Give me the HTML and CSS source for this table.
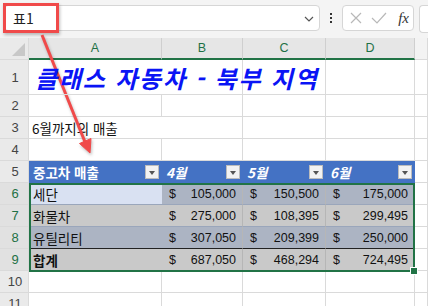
FILE: index.html
```html
<!DOCTYPE html>
<html lang="ko">
<head>
    <meta charset="UTF-8">
    <title>표1 - 북부 지역</title>
    <link rel="stylesheet" href="styles.css">
</head>
<body>
    <div class="topbar">
        <div class="name-box">
            <span>표1</span>
            <svg class="chev" width="10" height="6" viewBox="0 0 10 6"><path d="M1 1 L5 5 L9 1" fill="none" stroke="#555" stroke-width="1.2"/></svg>
        </div>
        <div class="dots"><i></i><i></i><i></i></div>
        <div class="fx-box">
            <svg width="14" height="14" viewBox="0 0 14 14"><path d="M2 2 L12 12 M12 2 L2 12" stroke="#b8b8b8" stroke-width="1.2"/></svg>
            <svg width="16" height="14" viewBox="0 0 16 14"><path d="M1 7 L6 12 L15 2" fill="none" stroke="#b8b8b8" stroke-width="1.2"/></svg>
            <span class="fx">fx</span>
        </div>
        <div class="formula-box"></div>
    </div>

    <div class="sheet">
        <!-- column headers -->
        <div class="corner"><span class="tri"></span></div>
        <div class="colhead sel">A</div>
        <div class="colhead sel">B</div>
        <div class="colhead sel">C</div>
        <div class="colhead sel">D</div>
        <div class="colhead"></div>

        <!-- row 1 -->
        <div class="rowhead tall">1</div>
        <div class="cell title">클래스 자동차 - 북부 지역</div>
        <div class="cell tall-cell"></div>
        <div class="cell tall-cell"></div>
        <div class="cell tall-cell"></div>
        <div class="cell tall-cell"></div>

        <!-- row 2 -->
        <div class="rowhead">2</div>
        <div class="cell"></div><div class="cell"></div><div class="cell"></div><div class="cell"></div><div class="cell"></div>

        <!-- row 3 -->
        <div class="rowhead">3</div>
        <div class="cell sub">6월까지의 매출</div>
        <div class="cell"></div><div class="cell"></div><div class="cell"></div><div class="cell"></div>

        <!-- row 4 -->
        <div class="rowhead">4</div>
        <div class="cell"></div><div class="cell"></div><div class="cell"></div><div class="cell"></div><div class="cell"></div>

        <!-- row 5: table header -->
        <div class="rowhead">5</div>
        <div class="cell th">중고차 매출<span class="filter"></span></div>
        <div class="cell th month">4월<span class="filter"></span></div>
        <div class="cell th month">5월<span class="filter"></span></div>
        <div class="cell th month">6월<span class="filter"></span></div>
        <div class="cell"></div>

        <!-- row 6 -->
        <div class="rowhead sel">6</div>
        <div class="cell td first light">세단</div>
        <div class="cell td money blue"><span>$</span><span>105,000</span></div>
        <div class="cell td money blue"><span>$</span><span>150,500</span></div>
        <div class="cell td money blue"><span>$</span><span>175,000</span></div>
        <div class="cell"></div>

        <!-- row 7 -->
        <div class="rowhead sel">7</div>
        <div class="cell td first gray">화물차</div>
        <div class="cell td money gray"><span>$</span><span>275,000</span></div>
        <div class="cell td money gray"><span>$</span><span>108,395</span></div>
        <div class="cell td money gray"><span>$</span><span>299,495</span></div>
        <div class="cell"></div>

        <!-- row 8 -->
        <div class="rowhead sel">8</div>
        <div class="cell td first blue before-total">유틸리티</div>
        <div class="cell td money blue before-total"><span>$</span><span>307,050</span></div>
        <div class="cell td money blue before-total"><span>$</span><span>209,399</span></div>
        <div class="cell td money blue before-total"><span>$</span><span>250,000</span></div>
        <div class="cell"></div>

        <!-- row 9 -->
        <div class="rowhead sel">9</div>
        <div class="cell td first gray total">합계</div>
        <div class="cell td money gray"><span>$</span><span>687,050</span></div>
        <div class="cell td money gray"><span>$</span><span>468,294</span></div>
        <div class="cell td money gray"><span>$</span><span>724,495</span></div>
        <div class="cell"></div>

        <!-- row 10 -->
        <div class="rowhead">10</div>
        <div class="cell"></div><div class="cell"></div><div class="cell"></div><div class="cell"></div><div class="cell"></div>

        <!-- row 11 -->
        <div class="rowhead">11</div>
        <div class="cell"></div><div class="cell"></div><div class="cell"></div><div class="cell"></div><div class="cell"></div>

        <div class="selection"><span class="handle"></span></div>
    </div>

    <!-- annotation -->
    <div class="callout"></div>
    <svg class="arrow" width="428" height="306" viewBox="0 0 428 306">
        <g fill="#f04a4a" stroke="#f04a4a">
            <line x1="42" y1="35" x2="85" y2="142" stroke-width="3"/>
            <polygon points="90,153 91,138.5 79.5,143.5" stroke-width="1"/>
        </g>
    </svg>
</body>
</html>
```

FILE: styles.css
```css
body {
    margin: 0;
    width: 428px;
    height: 306px;
    overflow: hidden;
    background-color: #fff;
    font-family: "Noto Sans CJK KR", "Liberation Sans", sans-serif;
    position: relative;
}
.topbar {
    height: 38px;
    background-color: #f4f4f4;
    display: flex;
    align-items: flex-start;
    padding-top: 5px;
    box-sizing: border-box;
}
.name-box {
    margin-left: 4px;
    width: 316px;
    height: 26px;
    box-sizing: border-box;
    background-color: #fff;
    border: 1px solid #d6d6d6;
    border-radius: 4px;
    display: flex;
    align-items: center;
    justify-content: space-between;
    padding: 0 5px 0 8px;
    font-size: 14px;
    color: #222;
}
.chev {
    margin-top: 1px;
}
.dots {
    width: 22px;
    height: 26px;
    display: flex;
    flex-direction: column;
    align-items: center;
    justify-content: center;
    gap: 2px;
}
.dots i {
    width: 2px;
    height: 2px;
    background-color: #333;
}
.fx-box {
    width: 72px;
    height: 26px;
    box-sizing: border-box;
    background-color: #fff;
    border: 1px solid #d6d6d6;
    border-radius: 4px;
    display: flex;
    align-items: center;
    padding: 0 4px 0 6px;
    gap: 8px;
}
.fx {
    font-family: "Liberation Serif", serif;
    font-style: italic;
    font-size: 15px;
    color: #333;
    margin-left: auto;
}
.formula-box {
    margin-left: 5px;
    flex: 1;
    height: 26px;
    background-color: #fff;
    border: 1px solid #d6d6d6;
    border-right: none;
    border-radius: 4px 0 0 4px;
}

/* sheet grid */
.sheet {
    display: grid;
    grid-template-columns: 29px 133px 81px 83px 89px 13px;
    grid-template-rows: 22px 35px repeat(10, 22px);
    position: relative;
}
.sheet > div {
    box-sizing: border-box;
    border-right: 1px solid #dadada;
    border-bottom: 1px solid #dadada;
}
.corner {
    background-color: #eaeaea;
    position: relative;
}
.tri {
    position: absolute;
    right: 3px;
    bottom: 3px;
    width: 0;
    height: 0;
    border-left: 13px solid transparent;
    border-bottom: 13px solid #c8c8c8;
}
.colhead {
    background-color: #f3f3f3;
    font-family: "Liberation Sans", sans-serif;
    font-size: 12.5px;
    color: #444;
    display: flex;
    align-items: center;
    justify-content: center;
}
.sheet > .colhead.sel {
    background-color: #e6e6e6;
    color: #1e7145;
    border-right-color: #cfcfcf;
    border-bottom: 2px solid #217346;
}
.rowhead {
    background-color: #eaeaea;
    font-family: "Liberation Sans", sans-serif;
    font-size: 13px;
    color: #444;
    display: flex;
    align-items: center;
    justify-content: center;
    padding-left: 2px;
}
.rowhead.sel {
    background-color: #e1e1e1;
    color: #1e7145;
}
.cell {
    display: flex;
    align-items: center;
    font-size: 13.5px;
    color: #111;
    white-space: nowrap;
}
.title {
    overflow: visible;
    font-size: 24px;
    font-weight: bold;
    font-style: italic;
    color: #0a14f5;
    padding-left: 6px;
    letter-spacing: 1.8px;
    position: relative;
    z-index: 1;
    border-right: none !important;
}
.sub {
    padding-left: 3px;
    overflow: visible;
    border-right: none !important;
}

/* table */
.sheet > .th {
    background-color: #4472c4;
    color: #fff;
    font-weight: bold;
    padding-left: 4px;
    position: relative;
    border-right: none;
    border-bottom: none;
}
.th.month {
    font-style: italic;
}
.filter {
    position: absolute;
    right: 3px;
    top: 4px;
    width: 14px;
    height: 14px;
    box-sizing: border-box;
    background-color: #f2f2f2;
    border: 1px solid #bcbcbc;
}
.filter::after {
    content: "";
    position: absolute;
    left: 3px;
    top: 5px;
    border-left: 3.5px solid transparent;
    border-right: 3.5px solid transparent;
    border-top: 4px solid #555;
}
.td {
    padding: 0 6px 0 4px;
}
.light {
    background-color: #d9e1f2;
}
.blue {
    background-color: #acb4c3;
}
.gray {
    background-color: #c9c9c9;
}
.sheet > .td {
    border-right-color: #b6b6b6;
    border-bottom-color: #9aa6bb;
}
.sheet > .td.first {
    border-right: none;
}
.sheet > .before-total {
    border-bottom-color: #222;
}
.money {
    justify-content: space-between;
    font-family: "Liberation Sans", sans-serif;
    font-size: 12.5px;
    padding-left: 7px;
}
.total {
    font-weight: bold;
}

/* selection outline */
.sheet > .selection {
    position: absolute;
    left: 29px;
    top: 145px;
    width: 386px;
    height: 89px;
    border: 2px solid #217346;
    pointer-events: none;
}
.handle {
    position: absolute;
    right: -5px;
    bottom: -5px;
    width: 6px;
    height: 6px;
    background-color: #217346;
    border: 1px solid #fff;
}

/* annotation */
.callout {
    position: absolute;
    left: 3px;
    top: 3px;
    width: 56px;
    height: 30px;
    box-sizing: border-box;
    border: 3.5px solid #f04a4a;
    box-shadow: 1px 2px 3px rgba(0, 0, 0, 0.25);
}
.arrow {
    position: absolute;
    left: 0;
    top: 0;
    pointer-events: none;
    filter: drop-shadow(1px 2px 1.5px rgba(0, 0, 0, 0.25));
}
```
